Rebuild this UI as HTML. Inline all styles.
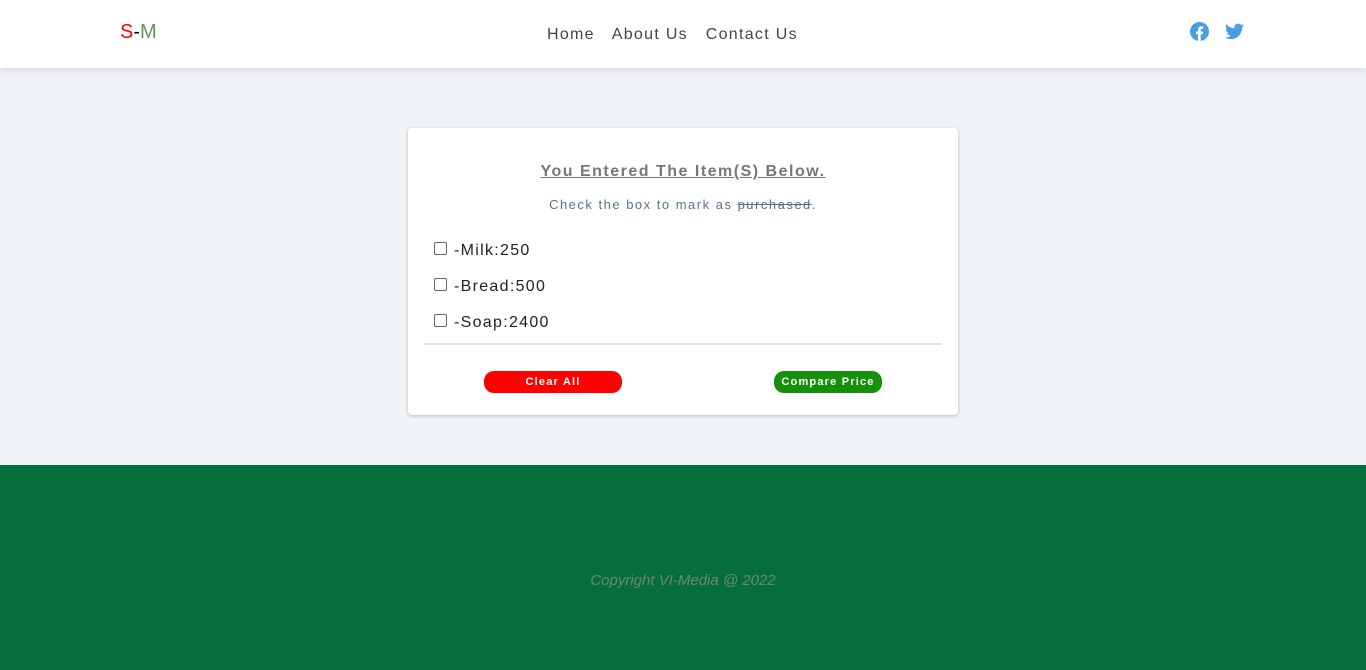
<!DOCTYPE html>
<html><head><style>
body{margin:0;width:1366px;height:670px;background:#f0f3f6;font-family:"Liberation Sans",sans-serif;overflow:hidden;position:relative}
.nav{position:absolute;top:0;left:0;width:1366px;height:68px;background:#fff;box-shadow:0 2px 8px rgba(0,0,0,.12)}
.logo{position:absolute;left:120px;top:21px;font-size:20px}
.links{position:absolute;left:547px;top:26px;font-size:16px;letter-spacing:1.3px;color:#444}
.links span{margin-right:12px}
.card{position:absolute;left:408px;top:128px;width:550px;height:287px;background:#fff;border-radius:4px;box-shadow:0 1px 3px rgba(0,0,0,.25)}
h3{position:absolute;top:35px;left:0;width:100%;text-align:center;margin:0;font-size:16px;color:#777;text-decoration:underline;letter-spacing:1.5px}
.sub{position:absolute;top:69px;width:100%;text-align:center;font-size:13px;color:#5a7290;letter-spacing:1.5px}
.item{position:absolute;left:26px;font-size:16px;letter-spacing:1.3px;color:#222}
.item i{display:inline-block;width:11px;height:11px;border:1px solid #666;border-radius:2px;margin-right:7px;vertical-align:0}
.hr{position:absolute;left:16px;top:215px;width:518px;height:2px;background:#e4e2e4}
.btn{position:absolute;top:243px;height:22px;border-radius:10px;color:#fff;font-size:11px;font-weight:bold;letter-spacing:1.2px;text-align:center;line-height:22px}
.foot{position:absolute;top:465px;left:0;width:1366px;height:205px;background:#066e3b}
.foot div{position:absolute;top:107px;width:100%;text-align:center;color:#6a8a70;font-style:italic;font-size:15px}
</style></head><body>
<div class="nav">
<div class="logo"><span style="color:#f00">S</span>-<span style="color:#5a9a5a">M</span></div>
<div class="links"><span>Home</span> <span>About Us</span> <span>Contact Us</span></div>
<svg style="position:absolute;left:1190px;top:22px" width="19" height="19" viewBox="0 0 24 24"><circle cx="12" cy="12" r="12" fill="#4a9de0"/><path d="M13.5 24v-8.5h2.8l.4-3.3h-3.2v-2c0-1 .3-1.6 1.6-1.6h1.7V5.7c-.3 0-1.3-.1-2.5-.1-2.5 0-4.1 1.5-4.1 4.2v2.4H7.4v3.3h2.8V24z" fill="#fff"/></svg>
<svg style="position:absolute;left:1225px;top:23px" width="19" height="17" viewBox="0 0 24 20"><path d="M24 2.4c-.9.4-1.800.7-2.8.8 1-.6 1.8-1.6 2.2-2.7-1 .6-2 1-3.1 1.2C19.3.7 18 0 16.6 0c-2.7 0-4.9 2.2-4.9 4.900 0 .4 0 .8.1 1.1C7.7 5.8 4.1 3.9 1.7.9c-.4.7-.7 1.6-.7 2.5 0 1.7.9 3.2 2.2 4.1-.8 0-1.6-.2-2.2-.6v.1c0 2.4 1.7 4.4 3.9 4.8-.4.1-.8.2-1.3.2-.3 0-.6 0-.9-.1.6 2 2.4 3.4 4.6 3.4-1.700 1.3-3.8 2.1-6.1 2.1-.4 0-.8 0-1.2-.1 2.2 1.4 4.8 2.2 7.5 2.2 9.1 0 14-7.5 14-14v-.6c1-.7 1.8-1.6 2.5-2.5z" fill="#4a9de0"/></svg>
</div>
<div class="card">
<h3>You Entered The Item(S) Below.</h3>
<div class="sub">Check the box to mark as <s>purchased</s>.</div>
<div class="item" style="top:114px"><i></i>-Milk:250</div>
<div class="item" style="top:150px"><i></i>-Bread:500</div>
<div class="item" style="top:186px"><i></i>-Soap:2400</div>
<div class="hr"></div>
<div class="btn" style="left:76px;width:138px;background:#f00">Clear All</div>
<div class="btn" style="left:366px;width:108px;background:#14900a">Compare Price</div>
</div>
<div class="foot"><div>Copyright VI-Media @ 2022</div></div>
</body></html>
